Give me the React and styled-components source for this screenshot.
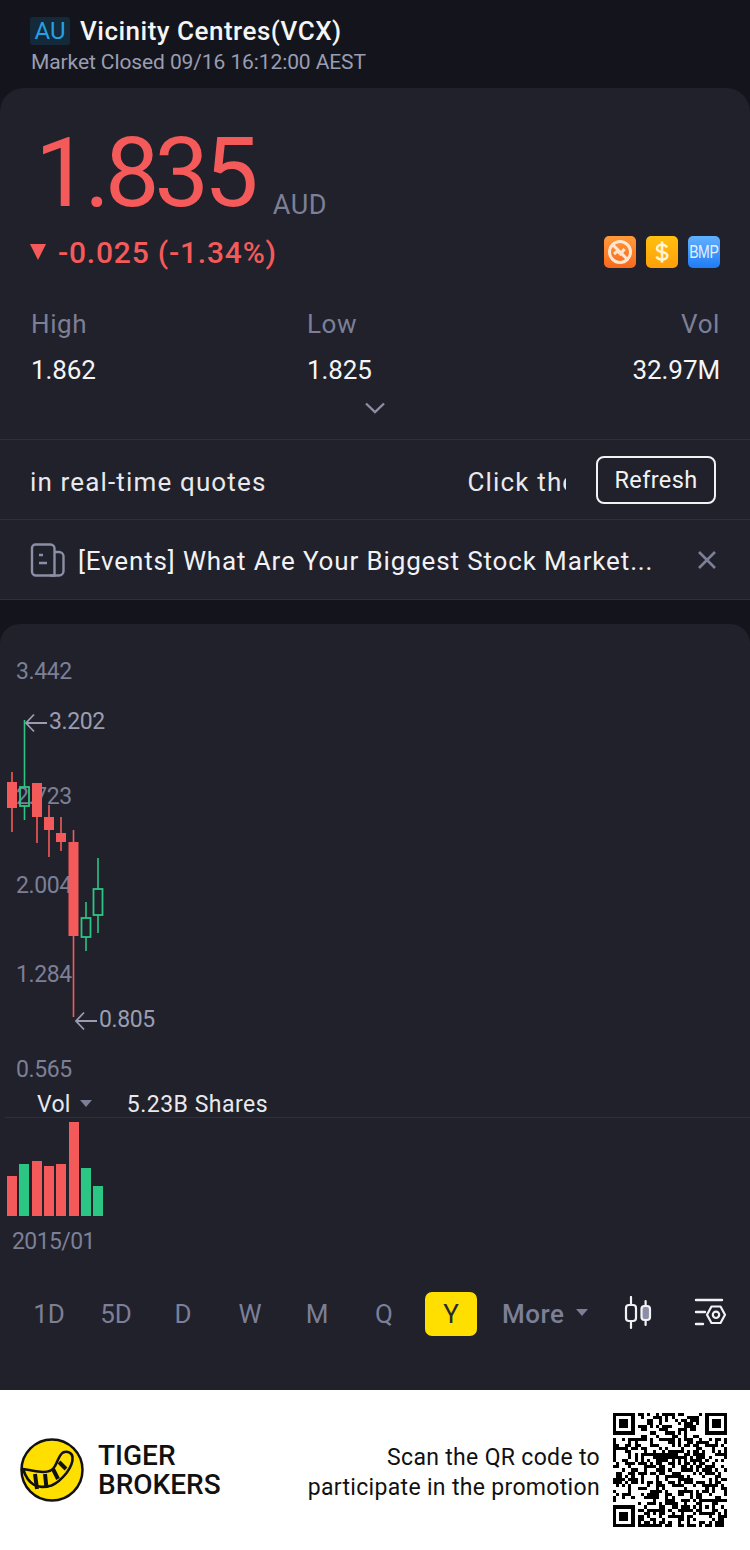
import React from "react";
import styled, { createGlobalStyle } from "styled-components";

const RED = "#f55a5a";
const GREEN = "#2cc684";

const GlobalStyle = createGlobalStyle`
  html, body {
    margin: 0;
    padding: 0;
    background: #14151c;
  }
  * {
    box-sizing: border-box;
  }
  body {
    font-family: Roboto, "Liberation Sans", sans-serif;
  }
`;

const candles = [
  { x: 12, top: 772, bottom: 832, open: 782, close: 808, up: false },
  { x: 24.5, top: 720, bottom: 820, open: 787, close: 806, up: true },
  { x: 37, top: 783, bottom: 843, open: 783, close: 817, up: false },
  { x: 49, top: 805, bottom: 857, open: 817, close: 830, up: false },
  { x: 61, top: 817, bottom: 851, open: 833, close: 842, up: false },
  { x: 73.5, top: 830, bottom: 1017, open: 842, close: 936, up: false },
  { x: 86, top: 902, bottom: 951, open: 918, close: 937, up: true },
  { x: 98, top: 858, bottom: 933, open: 889, close: 915, up: true },
];

const volumes = [
  { h: 40, up: false },
  { h: 52, up: true },
  { h: 55, up: false },
  { h: 50, up: false },
  { h: 52, up: false },
  { h: 94, up: false },
  { h: 48, up: true },
  { h: 30, up: true },
];

const axisLabels = [
  { text: "3.442", y: 34 },
  { text: "2.723", y: 159 },
  { text: "2.004", y: 248 },
  { text: "1.284", y: 337 },
  { text: "0.565", y: 432 },
];

const tabs = ["1D", "5D", "D", "W", "M", "Q", "Y"];

const qrCells = () => {
  const n = 37;
  let seed = 4711;
  const next = () => {
    seed = (seed * 1103515245 + 12345) & 0x7fffffff;
    return (seed >> 16) & 1;
  };
  const inFinder = (x, y) =>
    (x < 8 && y < 8) || (x >= n - 8 && y < 8) || (x < 8 && y >= n - 8);
  const inAlign = (x, y) => x >= 28 && x <= 32 && y >= 28 && y <= 32;
  let d = "";
  for (let y = 0; y < n; y++) {
    for (let x = 0; x < n; x++) {
      if (!inFinder(x, y) && !inAlign(x, y) && next()) {
        d += `M${x} ${y}h1v1h-1z`;
      }
    }
  }
  const finder = (x, y) =>
    `M${x} ${y}h7v7h-7zM${x + 1} ${y + 1}v5h5v-5zM${x + 2} ${y + 2}h3v3h-3z`;
  d += finder(0, 0) + finder(n - 7, 0) + finder(0, n - 7);
  d += "M28 28h5v5h-5zM29 29v3h3v-3zM30 30h1v1h-1z";
  return d;
};

const App = () => {
  return (
    <Page>
      <GlobalStyle />
      <Header>
        <TitleRow>
          <MarketBadge>AU</MarketBadge>
          <StockName>Vicinity Centres(VCX)</StockName>
        </TitleRow>
        <MarketStatus>Market Closed 09/16 16:12:00 AEST</MarketStatus>
      </Header>

      <QuotePanel>
        <PriceRow>
          <Price>1.835</Price>
          <Currency>AUD</Currency>
        </PriceRow>
        <ChangeRow>
          <Change>
            <DownMark />
            -0.025 (-1.34%)
          </Change>
          <Tags>
            <Tag $from="#ff9a3a" $to="#f9681d">
              <svg width="32" height="32" viewBox="0 0 32 32" fill="none">
                <circle cx="16" cy="16" r="10.5" stroke="#ffe6d2" strokeWidth="3" />
                <path d="M8.5 8.5l15 15" stroke="#ffe6d2" strokeWidth="3" />
                <path d="M10 18l3.5-3 3 3 4-5" stroke="#ffe6d2" strokeWidth="3" />
              </svg>
            </Tag>
            <Tag $from="#ffc010" $to="#ff9f0a">
              <svg width="32" height="32" viewBox="0 0 32 32" fill="none">
                <path
                  d="M21 11.5c-.8-1.8-2.6-2.8-5-2.8-2.9 0-5 1.500-5 3.700 0 5 10.300 2.300 10.300 7.300 0 2.200-2.300 3.700-5.300 3.700-2.600 0-4.700-1.100-5.500-3"
                  stroke="#fff3d0"
                  strokeWidth="2.600"
                />
                <path d="M16 5.500v21" stroke="#fff3d0" strokeWidth="2.600" />
              </svg>
            </Tag>
            <Tag $from="#62b0ff" $to="#1f7cf5">
              <TagText>BMP</TagText>
            </Tag>
          </Tags>
        </ChangeRow>

        <StatsRow>
          <Stat>
            <StatLabel>High</StatLabel>
            <StatValue>1.862</StatValue>
          </Stat>
          <Stat>
            <StatLabel>Low</StatLabel>
            <StatValue>1.825</StatValue>
          </Stat>
          <Stat $right>
            <StatLabel>Vol</StatLabel>
            <StatValue>32.97M</StatValue>
          </Stat>
        </StatsRow>
        <ExpandRow>
          <svg width="22" height="14" viewBox="0 0 22 14" fill="none">
            <path d="M2 2.500l9 8.500 9-8.500" stroke="#8b8ea5" strokeWidth="2.400" />
          </svg>
        </ExpandRow>

        <TickerRow>
          <Ticker>
            <TickerText>in real-time quotes</TickerText>
            <TickerText>Click the Refresh button to update</TickerText>
          </Ticker>
          <RefreshButton>Refresh</RefreshButton>
        </TickerRow>

        <NewsRow>
          <svg width="36" height="34" viewBox="0 0 36 34" fill="none">
            <path
              d="M2 5a3.500 3.500 0 013.500-3.500h15a4 4 0 014 4V32.500H6a4 4 0 01-4-4z"
              stroke="#8b8ea5"
              strokeWidth="2.400"
            />
            <path d="M24.500 9H29a4.500 4.500 0 014.500 4.500V28a4.500 4.500 0 01-4.500 4.500H20" stroke="#8b8ea5" strokeWidth="2.400" />
            <path d="M9 12h4M9 20h8" stroke="#8b8ea5" strokeWidth="2.400" />
          </svg>
          <NewsText>[Events] What Are Your Biggest Stock Market...</NewsText>
          <svg width="20" height="20" viewBox="0 0 20 20" fill="none">
            <path d="M2 2l16 16M18 2L2 18" stroke="#7c7f96" strokeWidth="2.600" />
          </svg>
        </NewsRow>
      </QuotePanel>

      <ChartPanel>
        <PriceChart>
          {axisLabels.map((label) => (
            <AxisLabel key={label.text} $y={label.y}>
              {label.text}
            </AxisLabel>
          ))}
          <CandleSvg width="130" height="470" viewBox="0 624 130 470">
            {candles.map((c) => {
              const color = c.up ? GREEN : RED;
              return (
                <g key={c.x}>
                  {c.up ? (
                    <>
                      <line x1={c.x} x2={c.x} y1={c.top} y2={c.open} stroke={color} strokeWidth="1.600" />
                      <line x1={c.x} x2={c.x} y1={c.close} y2={c.bottom} stroke={color} strokeWidth="1.600" />
                      <rect
                        x={c.x - 4.5}
                        y={c.open}
                        width="9"
                        height={c.close - c.open}
                        fill="none"
                        stroke={color}
                        strokeWidth="1.800"
                      />
                    </>
                  ) : (
                    <>
                      <line x1={c.x} x2={c.x} y1={c.top} y2={c.bottom} stroke={color} strokeWidth="1.600" />
                      <rect x={c.x - 5} y={c.open} width="10" height={c.close - c.open} fill={color} />
                    </>
                  )}
                </g>
              );
            })}
            <path d="M47 723H26M34 714.500l-8 8.500 8 8.500" stroke="#9a9db2" strokeWidth="1.800" fill="none" />
            <path d="M97 1021H76M84 1012.500l-8 8.500 8 8.500" stroke="#9a9db2" strokeWidth="1.800" fill="none" />
          </CandleSvg>
          <ExtremeLabel $x={49} $y={84}>3.202</ExtremeLabel>
          <ExtremeLabel $x={99} $y={382}>0.805</ExtremeLabel>
        </PriceChart>

        <VolHeader>
          <VolName>
            Vol
            <Caret />
          </VolName>
          <VolValue>5.23B Shares</VolValue>
        </VolHeader>
        <VolBars>
          {volumes.map((v, i) => (
            <VolBar key={i} $up={v.up} style={{ height: v.h }} />
          ))}
        </VolBars>
        <DateLabel>2015/01</DateLabel>

        <PeriodBar>
          <Periods>
            {tabs.map((t) => (
              <Period key={t} $active={t === "Y"}>
                {t}
              </Period>
            ))}
          </Periods>
          <MoreButton>
            More
            <Caret />
          </MoreButton>
          <ToolIcon>
            <svg width="32" height="36" viewBox="0 0 32 36" fill="none">
              <path d="M8 1v8M8 25v7M22.600 5v6M22.600 24v5" stroke="#f2f2f5" strokeWidth="2.200" strokeLinecap="round" />
              <rect x="3" y="9" width="10" height="16" rx="3" stroke="#f2f2f5" strokeWidth="2.200" />
              <rect x="18.500" y="10" width="8.500" height="14" rx="3" fill="#8b8ea5" stroke="#f2f2f5" strokeWidth="2.200" />
            </svg>
          </ToolIcon>
          <ToolIcon>
            <svg width="32" height="32" viewBox="0 0 32 32" fill="none">
              <path d="M2 2h26M2 14h9M2 26h7" stroke="#f2f2f5" strokeWidth="2.400" strokeLinecap="round" />
              <path d="M17.500 8.500h9L31 16.800l-4.500 8.200h-9L13 16.800z" stroke="#f2f2f5" strokeWidth="2.200" strokeLinejoin="round" />
              <circle cx="22" cy="16.800" r="3.200" stroke="#f2f2f5" strokeWidth="2.200" />
            </svg>
          </ToolIcon>
        </PeriodBar>
      </ChartPanel>

      <Footer>
        <Brand>
          <svg width="66" height="66" viewBox="0 0 66 66" fill="none">
            <circle cx="32" cy="33" r="30.500" fill="#ffdf00" stroke="#111" strokeWidth="2.500" />
            <path
              d="M3 32c7 1 14 3 20 3 6 0 10-2 12-6 3-5 4-11 8-13.500 4-2 9 0 9.500 4.500.5 5-3 12-6 16-4 5-9 10-15 12.500-6 2-14 2-18-1-5-3-8-8-10.500-15.500z"
              fill="#ffdf00"
              stroke="#111"
              strokeWidth="2.600"
              strokeLinejoin="round"
            />
            <path
              d="M15 37l2 15M25 37l1.500 14M33 32l5 10M39 25l7 7"
              stroke="#111"
              strokeWidth="4"
            />
          </svg>
          <BrandName>
            TIGER
            <br />
            BROKERS
          </BrandName>
        </Brand>
        <ScanText>
          Scan the QR code to
          <br />
          participate in the promotion
        </ScanText>
        <svg width="114" height="114" viewBox="0 0 37 37" shapeRendering="crispEdges">
          <path d={qrCells()} fill="#000" fillRule="evenodd" />
        </svg>
      </Footer>
    </Page>
  );
};

export default App;

const Page = styled.div`
  width: 750px;
  height: 1550px;
  overflow: hidden;
  background: #14151c;
  display: flex;
  flex-direction: column;
`;

const Header = styled.header`
  height: 88px;
  padding: 16px 30px 0;
`;

const TitleRow = styled.div`
  display: flex;
  align-items: center;
  gap: 10px;
`;

const MarketBadge = styled.span`
  width: 40px;
  height: 28px;
  border-radius: 3px;
  background: #14293a;
  color: #27a0e0;
  font-size: 24px;
  line-height: 28px;
  text-align: center;
`;

const StockName = styled.span`
  color: #f5f5f7;
  font-size: 26px;
  line-height: 30px;
  letter-spacing: 0.5px;
  font-weight: 500;
`;

const MarketStatus = styled.div`
  margin-top: 2px;
  margin-left: 1px;
  color: #9a9db2;
  font-size: 21px;
  line-height: 28px;
  letter-spacing: -0.1px;
`;

const QuotePanel = styled.section`
  height: 512px;
  background: #20212b;
  border-radius: 24px 24px 0 0;
  display: flex;
  flex-direction: column;
`;

const PriceRow = styled.div`
  display: flex;
  align-items: baseline;
  height: 140px;
  padding: 40px 0 0 35px;
  gap: 19px;
`;

const Price = styled.span`
  color: ${RED};
  font-size: 97px;
  line-height: 90px;
  letter-spacing: -5px;
`;

const Currency = styled.span`
  position: relative;
  top: 8px;
  color: #7c7f96;
  font-size: 27px;
  letter-spacing: 0.6px;
`;

const ChangeRow = styled.div`
  display: flex;
  align-items: center;
  justify-content: space-between;
  height: 44px;
  padding: 4px 30px 0;
`;

const Change = styled.div`
  display: flex;
  align-items: center;
  gap: 12px;
  color: ${RED};
  font-size: 30px;
  font-weight: 500;
  letter-spacing: 0.8px;
`;

const DownMark = styled.span`
  width: 0;
  height: 0;
  border-left: 8px solid transparent;
  border-right: 8px solid transparent;
  border-top: 16px solid ${RED};
`;

const Tags = styled.div`
  display: flex;
  gap: 10px;
`;

const Tag = styled.div`
  width: 32px;
  height: 32px;
  border-radius: 5px;
  background: linear-gradient(180deg, ${(p) => p.$from}, ${(p) => p.$to});
  display: flex;
  align-items: center;
  justify-content: center;
`;

const TagText = styled.span`
  color: #e2efff;
  font-family: "Liberation Sans", sans-serif;
  font-size: 18px;
  letter-spacing: -0.5px;
  transform: scaleX(0.78);
`;

const StatsRow = styled.div`
  display: grid;
  grid-template-columns: 276px 1fr auto;
  padding: 36px 30px 0 31px;
`;

const Stat = styled.div`
  text-align: ${(p) => (p.$right ? "right" : "left")};
`;

const StatLabel = styled.div`
  color: #7c7f96;
  font-size: 26px;
  line-height: 32px;
  letter-spacing: 0.6px;
`;

const StatValue = styled.div`
  margin-top: 14px;
  color: #f5f5f7;
  font-size: 26px;
  line-height: 32px;
  letter-spacing: -0.1px;
`;

const ExpandRow = styled.div`
  display: flex;
  justify-content: center;
  height: 53px;
  padding-top: 15px;
`;

const TickerRow = styled.div`
  height: 81px;
  padding: 0 34px 0 30px;
  display: flex;
  align-items: center;
  border-top: 1px solid #2e303b;
  border-bottom: 1px solid #2e303b;
`;

const Ticker = styled.div`
  flex: 1;
  display: flex;
  gap: 201px;
  overflow: hidden;
  white-space: nowrap;
  margin-right: 30px;
  padding-top: 4px;
`;

const TickerText = styled.span`
  color: #e9e9ed;
  font-size: 26px;
  letter-spacing: 1.15px;
`;

const RefreshButton = styled.button`
  width: 120px;
  height: 48px;
  flex: none;
  padding: 0;
  background: transparent;
  border: 2px solid #f2f2f5;
  border-radius: 8px;
  color: #f2f2f5;
  font-family: inherit;
  font-size: 23.5px;
  letter-spacing: 0.4px;
`;

const NewsRow = styled.div`
  height: 80px;
  padding: 0 33px 0 30px;
  display: flex;
  align-items: center;
  border-bottom: 1px solid #2e303b;

  svg:first-child {
    flex: none;
  }
`;

const NewsText = styled.span`
  flex: 1;
  margin-left: 12px;
  padding-top: 2px;
  color: #f2f2f5;
  font-size: 26px;
  letter-spacing: 0.86px;
  white-space: nowrap;
`;

const ChartPanel = styled.section`
  margin-top: 24px;
  height: 766px;
  background: #20212b;
  border-radius: 20px 20px 0 0;
`;

const PriceChart = styled.div`
  position: relative;
  height: 470px;
`;

const AxisLabel = styled.span`
  position: absolute;
  left: 16px;
  top: ${(p) => p.$y}px;
  color: #7c7f96;
  font-size: 23px;
  line-height: 28px;
  letter-spacing: -0.4px;
`;

const ExtremeLabel = styled(AxisLabel)`
  left: ${(p) => p.$x}px;
  color: #9a9db2;
`;

const CandleSvg = styled.svg`
  position: absolute;
  left: 0;
  top: 0;
`;

const VolHeader = styled.div`
  height: 24px;
  margin-left: 5px;
  padding-left: 32px;
  display: flex;
  align-items: center;
  gap: 35px;
  border-bottom: 1px solid #2e303b;
`;

const VolName = styled.span`
  display: flex;
  align-items: center;
  gap: 9px;
  color: #e9e9ed;
  font-size: 23px;
  letter-spacing: 0.3px;
  position: relative;
  top: -1px;
`;

const Caret = styled.span`
  width: 0;
  height: 0;
  border-left: 6px solid transparent;
  border-right: 6px solid transparent;
  border-top: 7px solid #7c7f96;
  margin-bottom: 3px;
`;

const VolValue = styled.span`
  color: #e9e9ed;
  font-size: 23px;
  letter-spacing: 0.5px;
  position: relative;
  top: -1px;
`;

const VolBars = styled.div`
  height: 98px;
  padding-left: 7px;
  display: flex;
  align-items: flex-end;
  gap: 2.35px;
`;

const VolBar = styled.div`
  width: 10px;
  background: ${(p) => (p.$up ? GREEN : RED)};
`;

const DateLabel = styled.div`
  margin-top: 12px;
  padding-left: 12px;
  color: #7c7f96;
  font-size: 23px;
  line-height: 28px;
  letter-spacing: -0.6px;
`;

const PeriodBar = styled.div`
  margin-top: 36px;
  height: 44px;
  padding-left: 23px;
  display: flex;
  align-items: center;
`;

const Periods = styled.div`
  display: flex;
  flex: none;
  gap: 15px;
`;

const Period = styled.span`
  width: 52px;
  height: 44px;
  border-radius: 7px;
  display: flex;
  align-items: center;
  justify-content: center;
  font-size: 26px;
  background: ${(p) => (p.$active ? "#ffdf00" : "transparent")};
  color: ${(p) => (p.$active ? "#2a2a30" : "#7c7f96")};
`;

const MoreButton = styled.span`
  margin-left: 25px;
  width: 121px;
  flex: none;
  display: flex;
  align-items: center;
  gap: 12px;
  color: #7c7f96;
  font-size: 26px;
  letter-spacing: 0.5px;
  font-weight: 500;
`;

const ToolIcon = styled.span`
  flex: none;
  display: flex;

  & + & {
    margin-left: 39px;
  }
`;

const Footer = styled.footer`
  height: 160px;
  background: #fff;
  padding: 0 23px 0 20px;
  display: flex;
  align-items: center;
`;

const Brand = styled.div`
  display: flex;
  align-items: center;
  gap: 12px;
`;

const BrandName = styled.div`
  color: #111;
  font-size: 28px;
  line-height: 29px;
  font-weight: 500;
`;

const ScanText = styled.div`
  flex: 1;
  margin-right: 13px;
  padding-top: 5px;
  color: #111;
  font-size: 23px;
  line-height: 30px;
  letter-spacing: 0.32px;
  text-align: right;
`;
